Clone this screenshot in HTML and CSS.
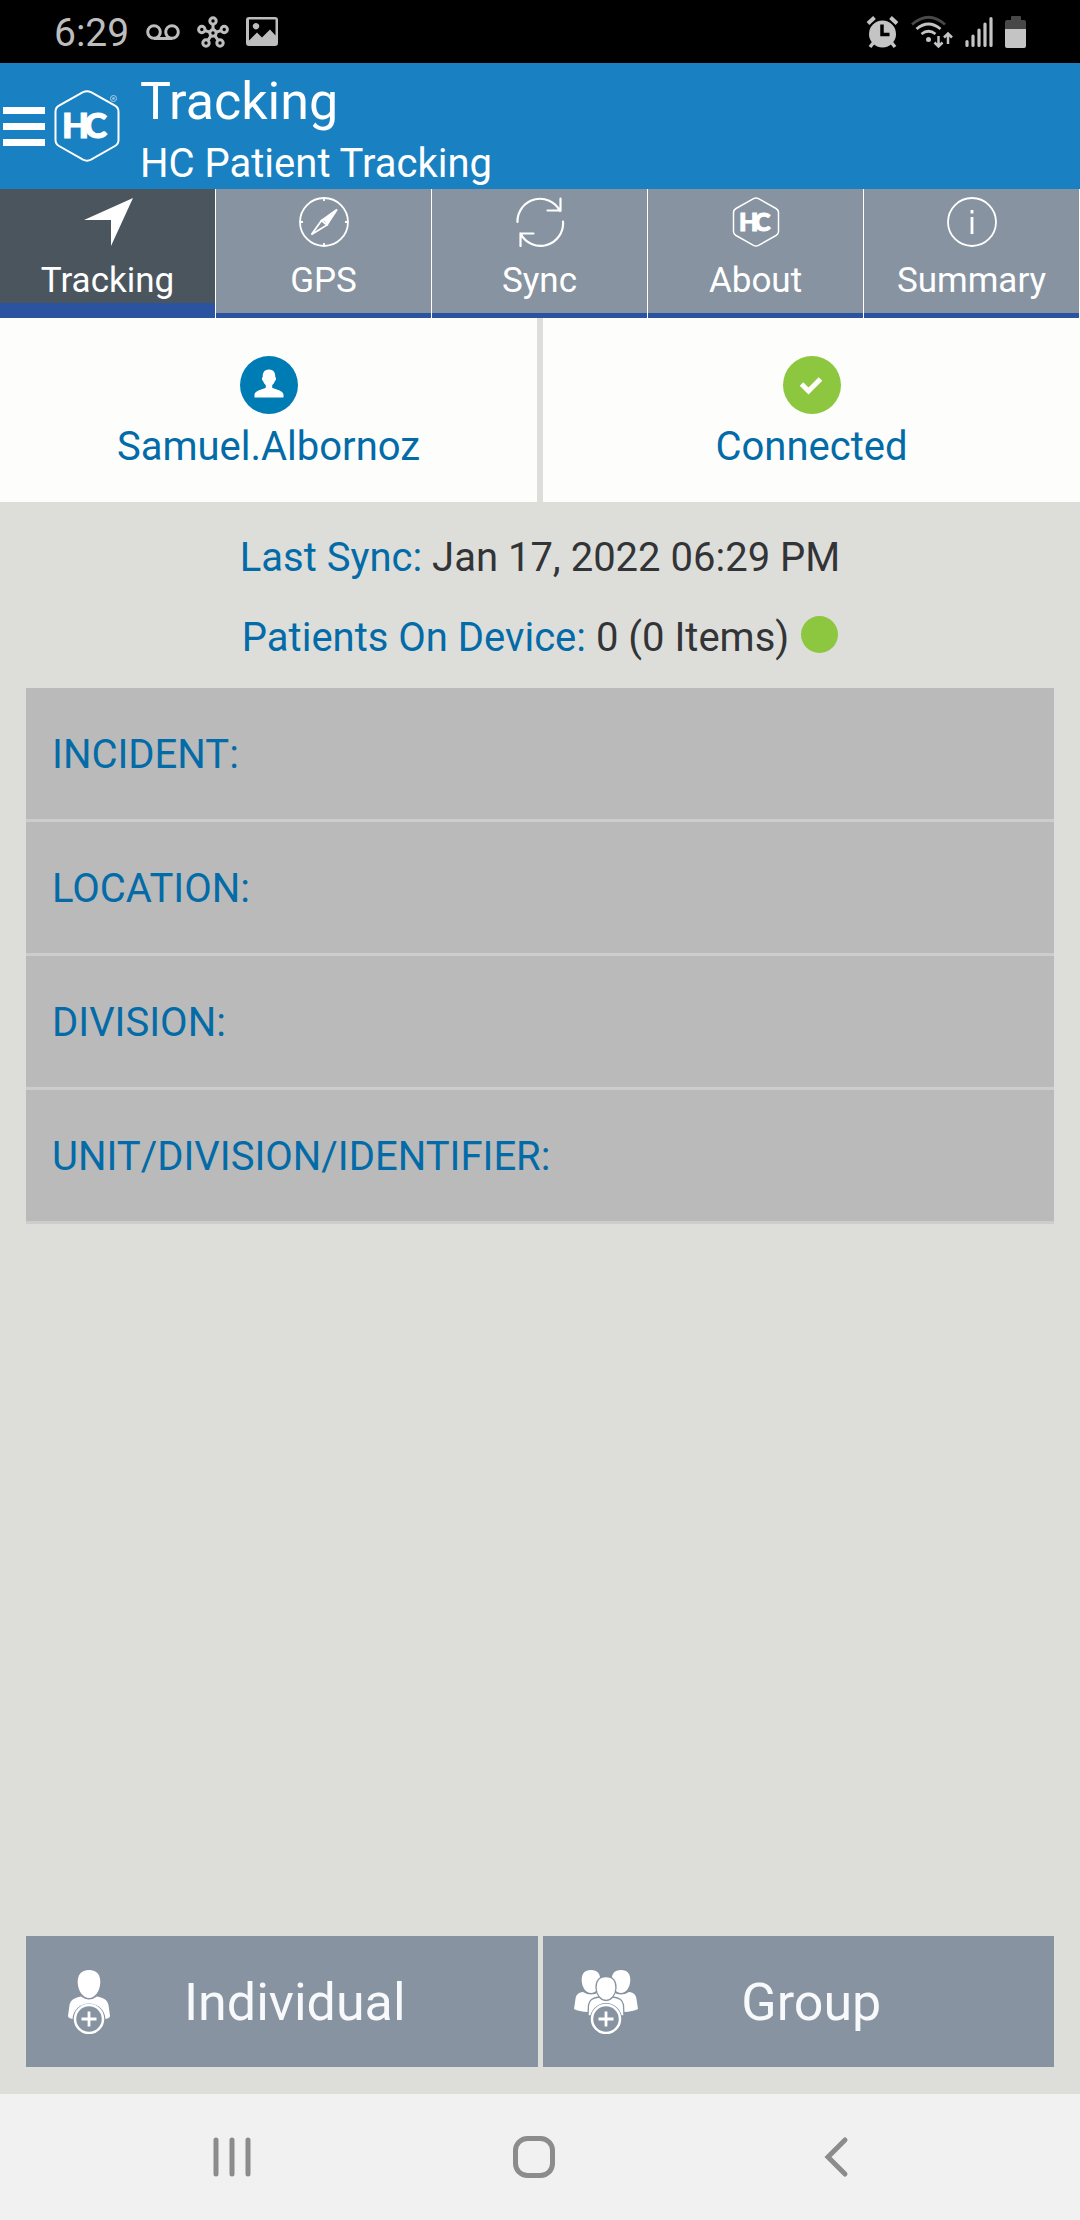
FILE: index.html
```html
<!DOCTYPE html>
<html lang="en">
<head>
<meta charset="utf-8">
<meta name="viewport" content="width=device-width, initial-scale=1">
<title>HC Patient Tracking</title>
<link rel="stylesheet" href="styles.css">
</head>
<body>
<div class="screen">
  <div class="statusbar">
    <div class="statusbar-left">
      <span class="clock">6:29</span>
      <svg width="34" height="32" viewBox="0 0 34 32" fill="none" stroke="#bdbdbd" stroke-width="3"><circle cx="8" cy="16" r="6.3"/><circle cx="26" cy="16" r="6.3"/><path d="M8 22.5h18"/></svg>
      <svg width="32" height="32" viewBox="0 0 32 32" fill="none" stroke="#bdbdbd" stroke-width="3"><circle cx="16" cy="17" r="3.2"/><circle cx="16" cy="5" r="3.2"/><circle cx="4.800" cy="13.500" r="3.2"/><circle cx="27.200" cy="13.500" r="3.2"/><circle cx="9" cy="27" r="3.2"/><circle cx="23" cy="27" r="3.2"/><path d="M16 8.200v5.600M7.600 14.500l5.300 1.600M24.400 14.500l-5.300 1.600M10.900 24.400l3.200-4.800M21.100 24.400l-3.200-4.800"/></svg>
      <svg width="32" height="32" viewBox="0 0 32 32"><path fill="#bdbdbd" fill-rule="evenodd" d="M3 1h26q3 0 3 3v23q0 3-3 3H3q-3 0-3-3V4q0-3 3-3zM3 3.500v21l8-8 5 5 8-8 5.500 6V3.500zM10 7a3.200 3.200 0 1 1-.01 0z"/></svg>
    </div>
    <div class="statusbar-right">
      <svg width="33" height="34" viewBox="0 0 33 34"><path d="M2 8.500L8.500 2.500M31 8.500L24.500 2.500" stroke="#c4c4c4" stroke-width="4"/><path d="M8 27l-4 5M25 27l4 5" stroke="#c4c4c4" stroke-width="3.500"/><circle cx="16.500" cy="19" r="13.500" fill="#c4c4c4"/><path d="M16 9.500v10h7.500" fill="none" stroke="#000" stroke-width="3.500"/></svg>
      <svg width="42" height="34" viewBox="0 0 42 34" fill="none" stroke-width="2.800"><path d="M1 9.500Q17.500-5 34 9.500" stroke="#484848"/><path d="M5.500 14q12-10 24 0M10.500 19q7-5.500 14 0" stroke="#c4c4c4"/><circle cx="17.500" cy="24.500" r="2.500" fill="#c4c4c4"/><path d="M27.500 21v10M23.500 27.500l4 4 4-4M37 29V19M33 22.500l4-4 4 4" stroke="#c4c4c4" stroke-width="2.500"/></svg>
      <svg width="28" height="34" viewBox="0 0 28 34" stroke="#c4c4c4" stroke-width="3.200" stroke-linecap="round"><path d="M2 26.500v4M8 21v9.500M14 15v15.500M20 9v21.500M26 3.500v27"/></svg>
      <svg width="22" height="34" viewBox="0 0 22 34"><path d="M6 5V2q0-1 1-1h8q1 0 1 1v3h3q2 0 2 2v8H0V7q0-2 2-2z" fill="#484848"/><path d="M0 14h21v17q0 2-2 2H2q-2 0-2-2z" fill="#c4c4c4"/></svg>
    </div>
  </div>

  <header class="appbar">
    <button class="menu" type="button" aria-label="Menu">
      <svg width="42" height="40" viewBox="0 0 42 40" fill="#fff"><path d="M0 1h42v7H0zM0 17h42v7H0zM0 33h42v7H0z"/></svg>
    </button>
    <svg class="logo" width="66" height="72" viewBox="0 0 66 72">
      <path d="M29 2.200q4-2 8 0l24 13.500q3.500 2 3.500 6V50q0 4-3.500 6L37 69.700q-4 2-8 0L5 56q-3.500-2-3.500-6V21.700q0-4 3.500-6z" fill="none" stroke="#fff" stroke-width="2"/>
      <text class="logo-mark" x="8 30" y="48">HC</text>
      <circle cx="59.500" cy="8.500" r="3" fill="none" stroke="#a9d0e8" stroke-width="1"/><circle cx="59.500" cy="8.500" r="1.200" fill="#a9d0e8"/>
    </svg>
    <div class="titles">
      <h1 class="title">Tracking</h1>
      <p class="subtitle">HC Patient Tracking</p>
    </div>
  </header>

  <nav class="tabs">
    <button class="tab tab-active" type="button">
      <svg width="50" height="50" viewBox="0 0 50 50"><path d="M50 1L1 23h27v26z" fill="#fff"/></svg>
      Tracking
    </button>
    <button class="tab" type="button">
      <svg width="50" height="50" viewBox="0 0 50 50" fill="none" stroke="#fff" stroke-width="1.800"><circle cx="25" cy="25" r="24"/><path d="M25 1v3M25 46v3M1 25h3M46 25h3"/><path d="M12.500 37.500L22.500 23.500l5.500 4.500z"/><path d="M38 12.500L22 24l3-1.500 3 3-.5 3z" fill="#fff"/></svg>
      GPS
    </button>
    <button class="tab" type="button">
      <svg width="50" height="50" viewBox="0 0 50 50" fill="none" stroke="#fff" stroke-width="2.200" stroke-linecap="round" stroke-linejoin="miter"><path d="M2.500 25A22.500 22.500 0 0 1 45 14M45.500 1.500V13.500H32.500"/><path d="M48 24.500A22.500 22.500 0 0 1 5.500 36.500M5.500 49V36.500H18.500"/></svg>
      Sync
    </button>
    <button class="tab" type="button">
      <svg width="50" height="50" viewBox="0 0 50 50">
        <path d="M22.500 1.600q2.500-1.200 5 0L45 11.500q2.500 1.500 2.500 4v19q0 2.500-2.500 4L27.500 48.400q-2.500 1.200-5 0L5 38.500q-2.500-1.500-2.500-4v-19q0-2.500 2.500-4z" fill="none" stroke="#fff" stroke-width="1.500"/>
        <text class="tab-mark" x="8 23" y="34">HC</text>
      </svg>
      About
    </button>
    <button class="tab" type="button">
      <svg width="50" height="50" viewBox="0 0 50 50" fill="none" stroke="#fff"><circle cx="25" cy="25" r="24" stroke-width="1.800"/><path d="M25 13v3.500M25 20v17" stroke-width="2.800"/></svg>
      Summary
    </button>
  </nav>

  <main class="content">
    <section class="cards">
      <div class="card">
        <svg width="58" height="58" viewBox="0 0 58 58"><circle cx="29" cy="29" r="29" fill="#007cb5"/><path d="M29 13.500c4.500 0 6.500 3 6.300 7.500 1.200 1 1 3-.5 4.300-.5 1.700-1.500 2.800-2.600 4v2.500c4 1.700 10.800 3 11.300 6.700v3H14.500v-3c.5-3.700 7.300-5 11.300-6.700v-2.500c-1.100-1.200-2.100-2.300-2.600-4-1.500-1.300-1.700-3.300-.5-4.300-.2-4.500 1.800-7.500 6.300-7.500z" fill="#fff"/></svg>
        <span>Samuel.Albornoz</span>
      </div>
      <div class="card">
        <svg width="58" height="58" viewBox="0 0 58 58"><circle cx="29" cy="29" r="29" fill="#8dc63f"/><path d="M18.500 28l7 7L37.500 23" fill="none" stroke="#fff" stroke-width="5"/></svg>
        <span>Connected</span>
      </div>
    </section>

    <section class="sync-info">
      <p class="info-line"><span class="info-label">Last Sync:</span> Jan 17, 2022 06:29 PM</p>
      <p class="info-line"><span class="info-label">Patients On Device:</span> 0 (0 Items) <span class="dot"></span></p>
    </section>

    <section class="fields">
      <button class="field" type="button">INCIDENT:</button>
      <button class="field" type="button">LOCATION:</button>
      <button class="field" type="button">DIVISION:</button>
      <button class="field" type="button">UNIT/DIVISION/IDENTIFIER:</button>
    </section>

    <div class="actions">
      <button class="action" type="button">
        <svg width="64" height="64" viewBox="0 0 64 64"><path d="M32 0c8 0 11.500 5 11.300 12.500C43 21 38 28 32 28s-11-7-11.300-15.500C20.500 5 24 0 32 0z" fill="#fff"/><path d="M24 26.500q8 6 16 0c7 1.500 10 3 11.500 8.500L53 46q0 2-4.500 3C48 40 41 33.500 32 33.500S16 40 15.500 49Q11 48 11 46l1.500-11C14 29.500 17 28 24 26.500z" fill="#fff"/><circle cx="32" cy="49" r="14" fill="#8793a0" stroke="#fff" stroke-width="2.500"/><path d="M32 41.500v15M24.500 49h15" stroke="#fff" stroke-width="2.800"/></svg>
        <span class="action-label">Individual</span>
      </button>
      <button class="action" type="button">
        <svg width="64" height="64" viewBox="0 0 64 64" fill="#fff"><path d="M17 0c6.500 0 9.500 4 9.300 10.500C26 17.500 22 23 17 23S8 17.500 7.700 10.500C7.500 4 10.500 0 17 0zM47 0c6.500 0 9.500 4 9.300 10.500C56 17.500 52 23 47 23s-9-5.500-9.300-12.500C37.500 4 40.500 0 47 0z"/><path d="M9 22q8 5 16 0l7 4 7-4q8 5 16 0c5 .5 7 3 7.500 7L64 39q-5 2.500-14 3H14Q5 41.500 0 39l1.500-10C2 25 4 22.500 9 22z"/><g stroke="#8793a0" stroke-width="1.300"><path d="M25 27q7 6 14 0c7 1 9.500 3 10.500 8L50 46H14l.5-11c1-5 3.500-7 10.500-8z"/><path d="M32 6.500c7 0 10.200 4.500 10 11.500-.3 7-5 12.500-10 12.500S22.300 25 22 18c-.2-7 3-11.500 10-11.500z"/></g><circle cx="32" cy="49" r="16" fill="#8793a0"/><circle cx="32" cy="49" r="14" fill="#8793a0" stroke="#fff" stroke-width="2.500"/><path d="M32 41.500v15M24.500 49h15" stroke="#fff" stroke-width="2.800"/></svg>
        <span class="action-label">Group</span>
      </button>
    </div>
  </main>

  <nav class="sysnav">
    <button class="sysbtn" type="button" aria-label="Recent apps"><svg width="42" height="42" viewBox="0 0 42 42" stroke="#8c8c8c" stroke-width="5" stroke-linecap="round"><path d="M5 4v34M21 4v34M37 4v34"/></svg></button>
    <button class="sysbtn" type="button" aria-label="Home"><svg width="42" height="42" viewBox="0 0 42 42" fill="none" stroke="#8c8c8c" stroke-width="5"><rect x="2.500" y="2.500" width="37" height="37" rx="12"/></svg></button>
    <button class="sysbtn" type="button" aria-label="Back"><svg width="42" height="42" viewBox="0 0 42 42" fill="none" stroke="#8c8c8c" stroke-width="5" stroke-linecap="round"><path d="M30 4L13 21l17 17"/></svg></button>
  </nav>
</div>
</body>
</html>
```

FILE: styles.css
```css
* {
  box-sizing: border-box;
}

body {
  margin: 0;
  font-family: Roboto, "Liberation Sans", sans-serif;
  font-size: 40px;
  background: #dddeda;
}

h1,
p {
  margin: 0;
  font-weight: 400;
}

button {
  margin: 0;
  padding: 0;
  border: 0;
  background: none;
  font: inherit;
  color: inherit;
}

svg {
  display: block;
  flex: none;
}

.screen {
  display: flex;
  flex-direction: column;
  min-height: 100vh;
}

/* System status bar */
.statusbar {
  display: flex;
  justify-content: space-between;
  align-items: center;
  height: 63px;
  padding: 0 53px 0 54px;
  background: #000;
  color: #bdbdbd;
}

.statusbar-left {
  display: flex;
  align-items: center;
  gap: 17px;
}

.clock {
  font-size: 39px;
  line-height: 60px;
  padding-top: 3px;
}

.statusbar-right {
  display: flex;
  align-items: center;
  gap: 12px;
}

/* App header */
.appbar {
  display: flex;
  align-items: center;
  padding: 0 3px;
  background: #1981c1;
  color: #fff;
}

.logo {
  margin: 0 20px 0 9px;
}

.logo-mark,
.tab-mark {
  font-family: Lato, sans-serif;
  font-weight: 900;
  font-size: 35px;
  fill: #fff;
  stroke: #fff;
  stroke-width: 1px;
}

.tab-mark {
  font-size: 25px;
}

.titles {
  padding-top: 3px;
}

.title {
  font-size: 52px;
  line-height: 72px;
}

.subtitle {
  line-height: 51px;
}

/* Tabs */
.tabs {
  display: grid;
  grid-template-columns: repeat(5, 1fr);
  color: #fff;
  background: #fff;
}

.tab {
  display: flex;
  flex-direction: column;
  align-items: center;
  justify-content: flex-start;
  gap: 12px;
  margin-right: 1px;
  padding-top: 8px;
  border-bottom: 5px solid #2a549f;
  background: #8793a0;
  font-size: 35px;
  line-height: 44px;
}

.tab-active {
  border-bottom-width: 15px;
  background: #4b555e;
}

/* Page */
.content {
  flex: 1;
  display: flex;
  flex-direction: column;
}

.cards {
  display: grid;
  grid-template-columns: 1fr 1fr;
  gap: 6px;
}

.card {
  display: flex;
  flex-direction: column;
  align-items: center;
  gap: 3px;
  padding: 38px 0 25px;
  background: #fdfdfc;
  color: #036ba7;
  line-height: 60px;
}

.sync-info {
  padding: 16px 0 10px;
  color: #333437;
}

.info-line {
  line-height: 80px;
  text-align: center;
}

.info-label {
  color: #036ba7;
}

.dot {
  display: inline-block;
  width: 37px;
  height: 37px;
  margin-left: 2px;
  border-radius: 50%;
  background: #8dc63f;
  vertical-align: -2px;
}

.fields {
  display: flex;
  flex-direction: column;
  margin: 0 26px;
}

.field {
  padding: 2px 26px 0;
  border-bottom: 3px solid #cdcdcd;
  background: #bababa;
  color: #036ba7;
  line-height: 129px;
  text-align: left;
}

.actions {
  display: grid;
  grid-template-columns: 1fr 1fr;
  gap: 5px;
  margin: auto 26px 27px;
}

.action {
  display: flex;
  align-items: center;
  padding: 0 69px 0 31px;
  background: #8793a0;
  color: #f8f9fb;
  font-size: 52px;
  line-height: 129px;
}

.action-label {
  flex: 1;
  padding-top: 2px;
  text-align: center;
}

/* System navigation bar */
.sysnav {
  display: grid;
  grid-template-columns: repeat(3, 1fr);
  padding: 0 93px 0 81px;
  background: #f1f1f1;
}

.sysbtn {
  display: flex;
  justify-content: center;
  padding: 42px 0;
}
```
